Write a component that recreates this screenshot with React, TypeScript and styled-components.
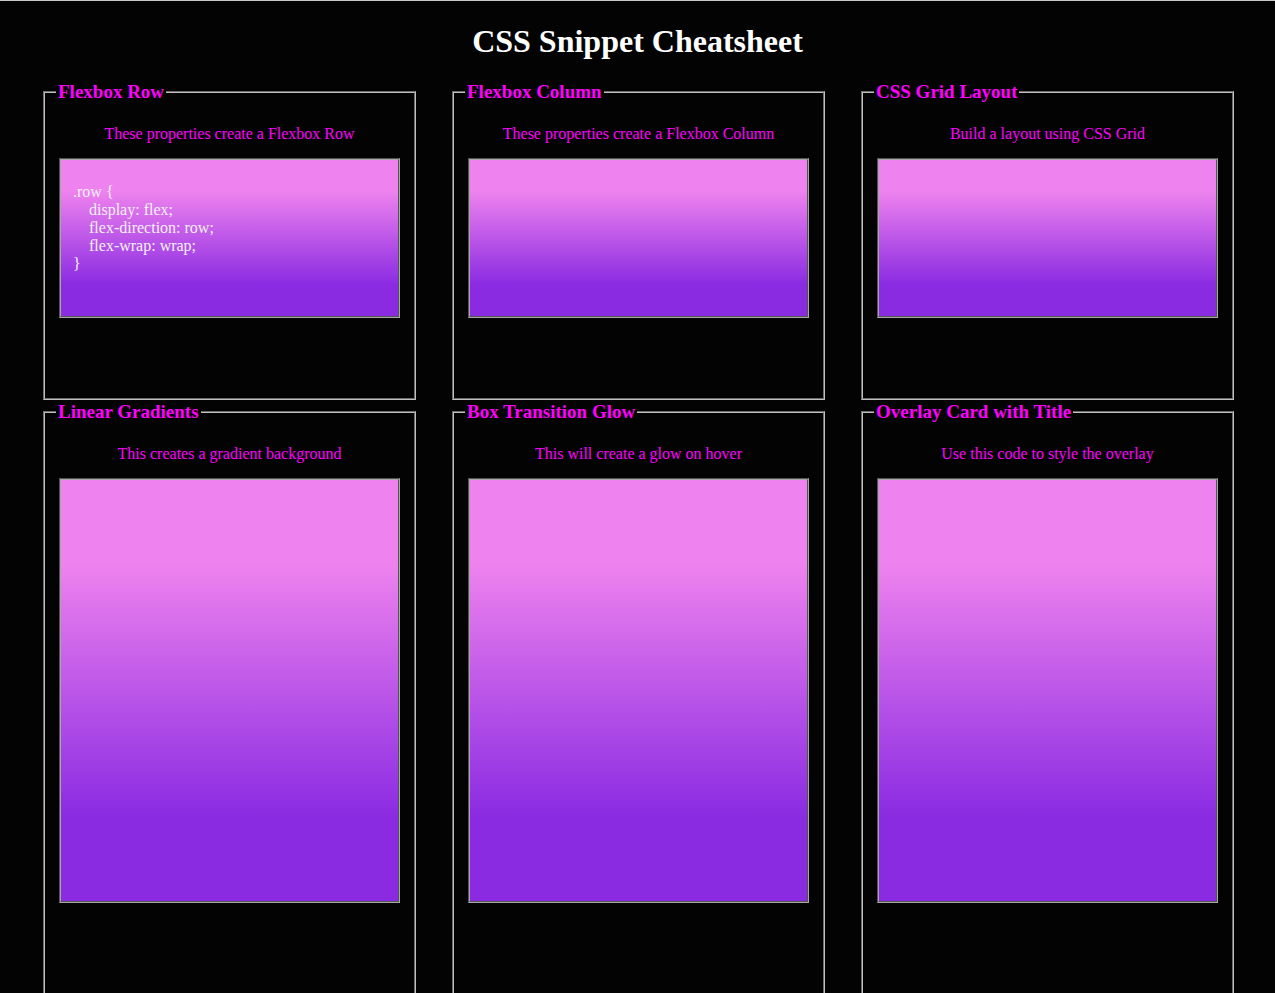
import styled, { createGlobalStyle } from 'styled-components';

const GlobalStyle = createGlobalStyle`
  html {
    background: #030303;
    border-top: 1px solid #c8c8c8;
  }
  body {
    margin: 0;
    background: #030303;
    font-family: 'Liberation Serif', 'Times New Roman', serif;
  }
`;

const Page = styled.main`
  padding: 0 0 0 43px;
`;

const Title = styled.h1`
  margin: 22px 0 21px -43px;
  text-align: center;
  font-size: 32px;
  font-weight: bold;
  color: #ffffff;
`;

const SnippetGrid = styled.div`
  display: grid;
  grid-template-columns: repeat(3, 373px);
  column-gap: 36px;
  row-gap: 1px;
`;

const Card = styled.fieldset<{ $spacer: number }>`
  margin: 0;
  min-width: 0;
  border: 2px groove #c0c0c0;
  padding: 6px 14px ${(p) => p.$spacer}px;
`;

const CardTitle = styled.legend`
  margin-left: -3px;
  padding: 0 2px;
  font-size: 19px;
  font-weight: bold;
  color: #ff00ff;
`;

const Description = styled.p`
  margin: 16px 0 15px;
  text-align: center;
  font-size: 16px;
  color: #ff00ff;
`;

const CodeBox = styled.pre<{ $height: number }>`
  box-sizing: border-box;
  margin: 0;
  height: ${(p) => p.$height}px;
  padding: 23px 12px;
  border: 2px groove #a8a8a8;
  background: linear-gradient(#ee82ee 20%, #8a2be2 80%);
  color: #f4f0f8;
  font-family: 'Liberation Serif', 'Times New Roman', serif;
  font-size: 16px;
  line-height: 18px;
  white-space: pre;
`;

type Snippet = {
  title: string;
  description: string;
  code: string;
};

const snippets: Snippet[] = [
  {
    title: 'Flexbox Row',
    description: 'These properties create a Flexbox Row',
    code: '.row {\n    display: flex;\n    flex-direction: row;\n    flex-wrap: wrap;\n}',
  },
  {
    title: 'Flexbox Column',
    description: 'These properties create a Flexbox Column',
    code: '',
  },
  {
    title: 'CSS Grid Layout',
    description: 'Build a layout using CSS Grid',
    code: '',
  },
  {
    title: 'Linear Gradients',
    description: 'This creates a gradient background',
    code: '',
  },
  {
    title: 'Box Transition Glow',
    description: 'This will create a glow on hover',
    code: '',
  },
  {
    title: 'Overlay Card with Title',
    description: 'Use this code to style the overlay',
    code: '',
  },
];

const App = () => {
  return (
    <>
      <GlobalStyle />
      <Page>
        <Title>CSS Snippet Cheatsheet</Title>
        <SnippetGrid>
          {snippets.map((s, i) => {
            const firstRow = i < 3;
            return (
              <Card key={s.title} $spacer={firstRow ? 80 : 140}>
                <CardTitle>{s.title}</CardTitle>
                <Description>{s.description}</Description>
                <CodeBox $height={firstRow ? 160 : 425}>{s.code}</CodeBox>
              </Card>
            );
          })}
        </SnippetGrid>
      </Page>
    </>
  );
};

export default App;
